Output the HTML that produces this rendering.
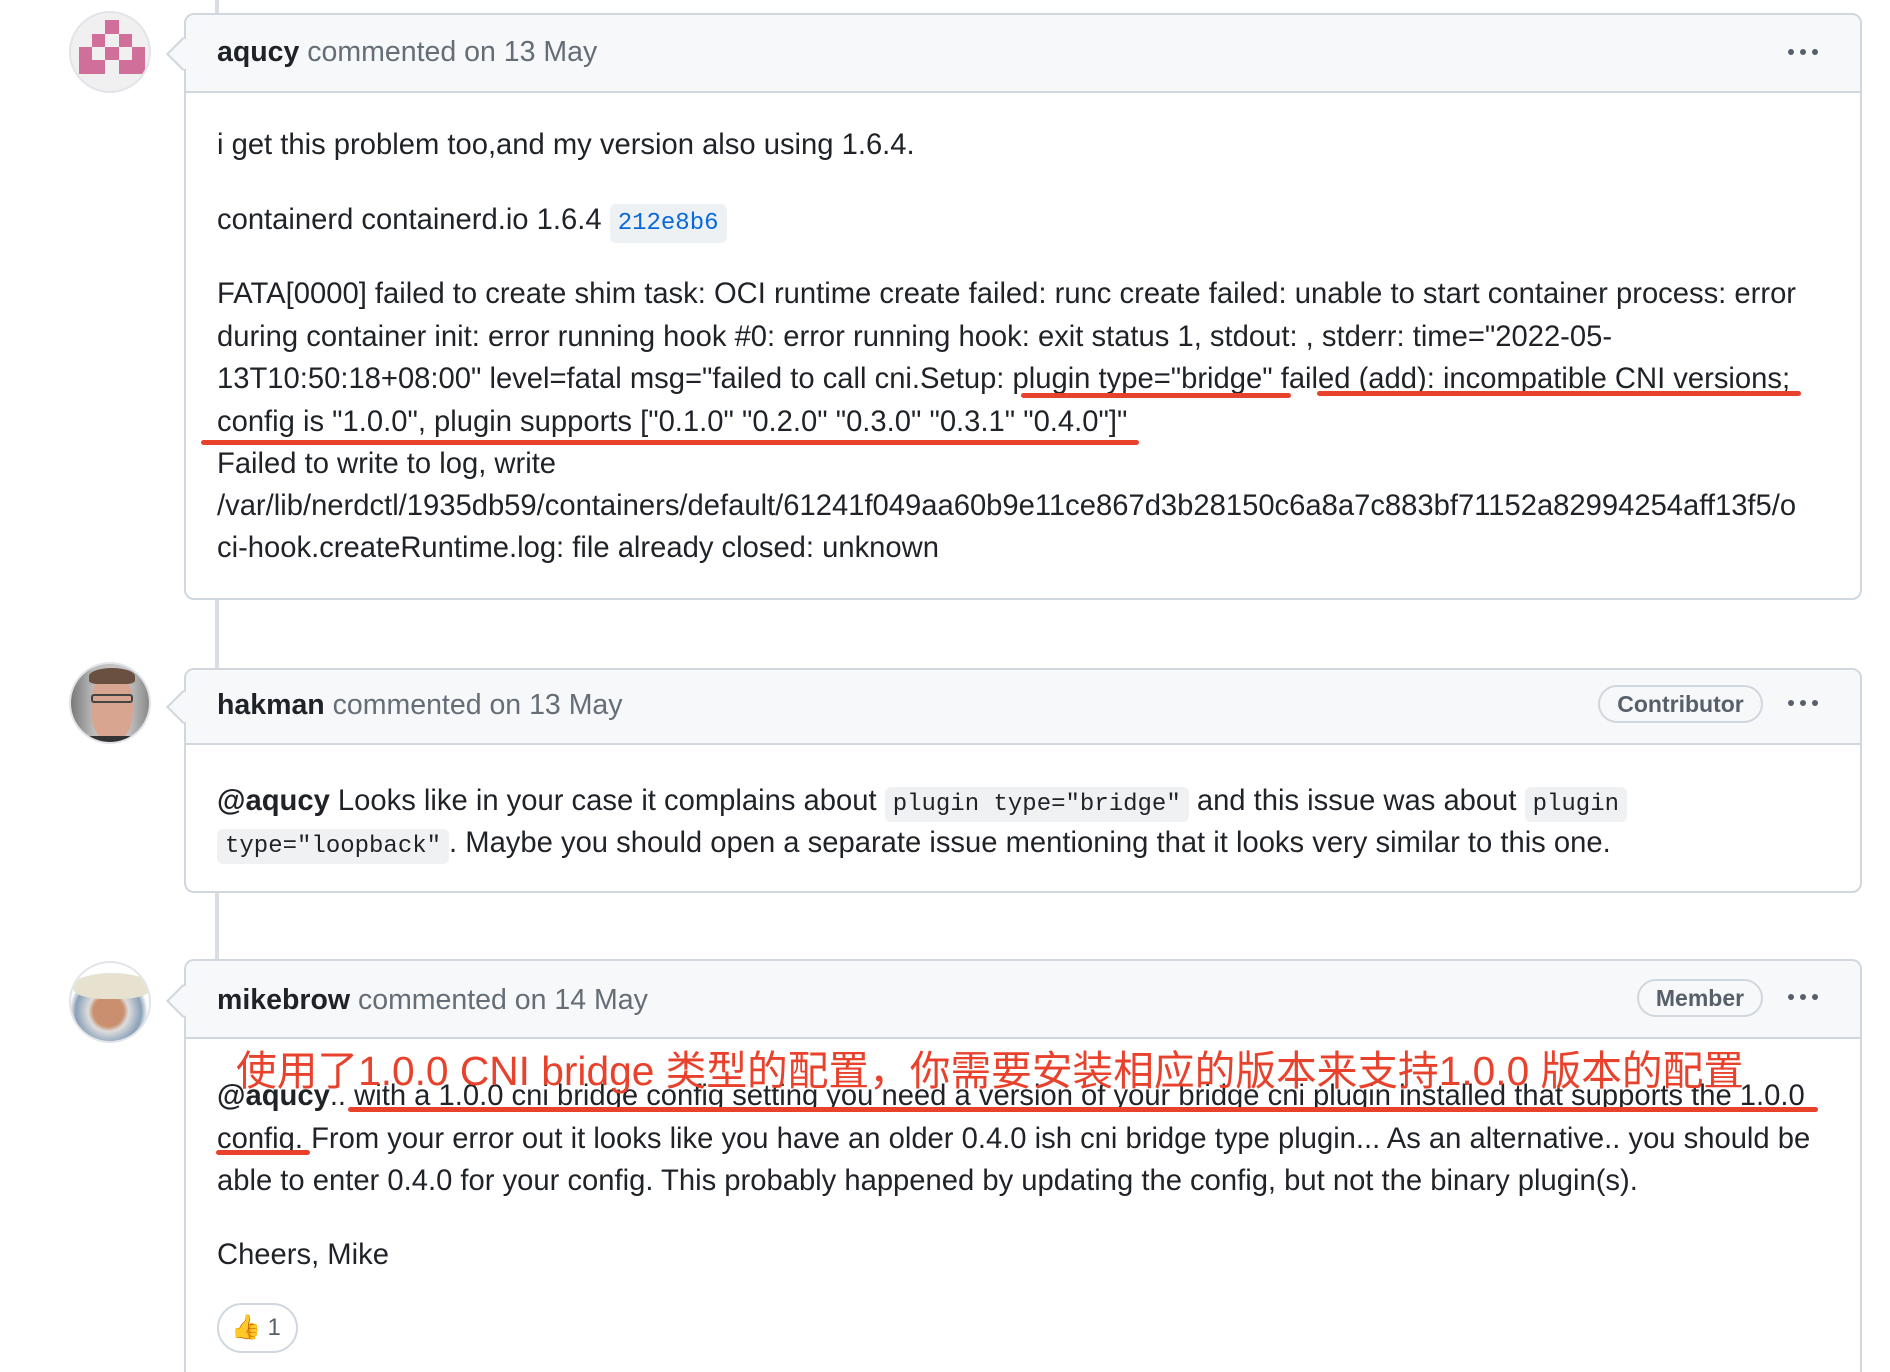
<!DOCTYPE html>
<html style="width:1890px;height:1372px;overflow:hidden"><head><meta charset="utf-8"><style>
*{margin:0;padding:0;box-sizing:border-box}
body{width:1890px;height:1372px;background:#fff;position:relative;overflow:hidden;font-family:"Liberation Sans","Noto Sans CJK SC",sans-serif;color:#1f2328}
.tl{position:absolute;left:215px;top:0;width:4px;height:1372px;background:#d8dee4}
.card{position:absolute;left:184px;width:1678px;border:2px solid #d0d7de;border-radius:10px;background:#fff}
.hdr{position:absolute;left:0;top:0;right:0;background:#f6f8fa;border-bottom:2px solid #d0d7de;border-radius:8px 8px 0 0}
.arrow{position:absolute;left:-15px;width:24px;height:24px;background:#f6f8fa;border-left:2px solid #d0d7de;border-bottom:2px solid #d0d7de;transform:rotate(45deg)}
.ln{position:absolute;left:217px;white-space:nowrap;font-size:29.2px;line-height:42px;height:42px}
.h{font-size:28.5px;color:#656d76}
.h b{color:#1f2328}
.dots{position:absolute;left:1785px}
.badge{position:absolute;border:2px solid #d0d7de;border-radius:20px;font-size:23px;color:#57606a;text-align:center;line-height:34px;font-weight:bold}
code{font-family:"Liberation Mono",monospace;font-size:24px;background:#eff1f3;border-radius:6px;padding:4px 8px}
.ul{position:absolute;height:5px;background:#e8412c;border-radius:3px}
.av{position:absolute;left:69px;width:82px;height:82px;border-radius:50%;border:2px solid #e1e4e8;overflow:hidden}
</style></head><body>
<div class="tl"></div>

<div class="av" style="top:11px;background:#f0f0f0">
<svg width="82" height="82" viewBox="0 0 82 82" style="position:absolute;left:-2px;top:-2px">
<g fill="#d0709a" transform="translate(-67,-9)">
<rect x="103" y="18" width="14" height="14"/>
<rect x="90" y="32" width="13" height="13"/><rect x="117" y="32" width="13" height="13"/>
<rect x="77" y="45" width="13" height="13"/><rect x="103" y="45" width="14" height="13"/><rect x="130" y="45" width="13" height="13"/>
<rect x="77" y="58" width="26" height="14"/><rect x="117" y="58" width="26" height="14"/>
</g></svg></div>

<div class="card" style="top:13px;height:587px">
<div class="hdr" style="height:78px"></div>
<div class="arrow" style="top:27px"></div>
</div>
<div class="ln h" style="top:31px"><b>aqucy</b> commented on 13 May</div>
<svg class="dots" style="top:46px" width="40" height="12"><g fill="#57606a"><circle cx="6" cy="6" r="3"/><circle cx="18" cy="6" r="3"/><circle cx="30" cy="6" r="3"/></g></svg>

<div class="ln" style="top:124px">i get this problem too,and my version also using 1.6.4.</div>
<div class="ln" style="top:199px">containerd containerd.io 1.6.4 <span style="font-family:'Liberation Mono',monospace;font-size:24px;color:#0969da;background:#eef1f4;border-radius:6px;padding:6px 8px">212e8b6</span></div>
<div class="ln" style="top:273px">FATA[0000] failed to create shim task: OCI runtime create failed: runc create failed: unable to start container process: error</div>
<div class="ln" style="top:316px">during container init: error running hook #0: error running hook: exit status 1, stdout: , stderr: time="2022-05-</div>
<div class="ln" style="top:358px">13T10:50:18+08:00" level=fatal msg="failed to call cni.Setup: plugin type="bridge" failed (add): incompatible CNI versions;</div>
<div class="ln" style="top:401px">config is "1.0.0", plugin supports ["0.1.0" "0.2.0" "0.3.0" "0.3.1" "0.4.0"]"</div>
<div class="ln" style="top:443px">Failed to write to log, write</div>
<div class="ln" style="top:485px">/var/lib/nerdctl/1935db59/containers/default/61241f049aa60b9e11ce867d3b28150c6a8a7c883bf71152a82994254aff13f5/o</div>
<div class="ln" style="top:527px">ci-hook.createRuntime.log: file already closed: unknown</div>
<div class="ul" style="left:1021px;top:393px;width:270px"></div>
<div class="ul" style="left:1317px;top:391px;width:484px"></div>
<div class="ul" style="left:201px;top:440px;width:938px"></div>

<div class="av" style="top:662px;background:linear-gradient(90deg,#7a7a7a,#bdbdbd 30%,#c8c8c8 70%,#8a8a8a)">
<div style="position:absolute;left:20px;top:8px;width:42px;height:70px;background:#d8a590;border-radius:45%"></div>
<div style="position:absolute;left:18px;top:4px;width:46px;height:16px;background:#6a5040;border-radius:50% 50% 20% 20%"></div>
<div style="position:absolute;left:20px;top:30px;width:42px;height:9px;border:2px solid #444;border-radius:3px"></div>
<div style="position:absolute;left:0;top:72px;width:82px;height:12px;background:#333"></div>
</div>

<div class="card" style="top:668px;height:225px">
<div class="hdr" style="height:75px"></div>
<div class="arrow" style="top:25px"></div>
</div>
<div class="ln h" style="top:684px"><b>hakman</b> commented on 13 May</div>
<div class="badge" style="left:1598px;top:685px;width:165px;height:38px">Contributor</div>
<svg class="dots" style="top:697px" width="40" height="12"><g fill="#57606a"><circle cx="6" cy="6" r="3"/><circle cx="18" cy="6" r="3"/><circle cx="30" cy="6" r="3"/></g></svg>
<div class="ln" style="top:780px"><b>@aqucy</b> Looks like in your case it complains about <code>plugin type="bridge"</code> and this issue was about <code>plugin</code></div>
<div class="ln" style="top:822px"><code>type="loopback"</code>. Maybe you should open a separate issue mentioning that it looks very similar to this one.</div>

<div class="av" style="top:961px;background:radial-gradient(circle at 48% 62%,#c98f6e 0 24%,#ddd 32%,#8aa0b8 52%,#fff 62%)">
<div style="position:absolute;left:2px;top:10px;width:78px;height:26px;background:#e6e2cf;border-radius:50% 50% 40% 40%"></div>
</div>

<div class="card" style="top:959px;height:413px;border-bottom:none;border-radius:10px 10px 0 0">
<div class="hdr" style="height:78px"></div>
<div class="arrow" style="top:28px"></div>
</div>
<div class="ln h" style="top:979px"><b>mikebrow</b> commented on 14 May</div>
<div class="badge" style="left:1637px;top:979px;width:126px;height:38px">Member</div>
<svg class="dots" style="top:991px" width="40" height="12"><g fill="#57606a"><circle cx="6" cy="6" r="3"/><circle cx="18" cy="6" r="3"/><circle cx="30" cy="6" r="3"/></g></svg>

<div class="ln" style="top:1075px"><b>@aqucy</b>.. with a 1.0.0 cni bridge config setting you need a version of your bridge cni plugin installed that supports the 1.0.0</div>
<div class="ln" style="top:1118px">config. From your error out it looks like you have an older 0.4.0 ish cni bridge type plugin... As an alternative.. you should be</div>
<div class="ln" style="top:1160px">able to enter 0.4.0 for your config. This probably happened by updating the config, but not the binary plugin(s).</div>
<div class="ln" style="top:1234px">Cheers, Mike</div>
<div style="position:absolute;left:236px;top:1046px;white-space:nowrap;font-size:40.7px;line-height:50px;color:#e8412c">使用了1.0.0 CNI bridge 类型的配置，你需要安装相应的版本来支持1.0.0 版本的配置</div>
<div class="ul" style="left:348px;top:1107px;width:1470px"></div>
<div class="ul" style="left:216px;top:1150px;width:94px"></div>

<div style="position:absolute;left:217px;top:1303px;width:81px;height:50px;border:2px solid #d0d7de;border-radius:25px;font-size:24px;line-height:46px;color:#57606a;padding-left:12px">👍 1</div>
</body></html>
